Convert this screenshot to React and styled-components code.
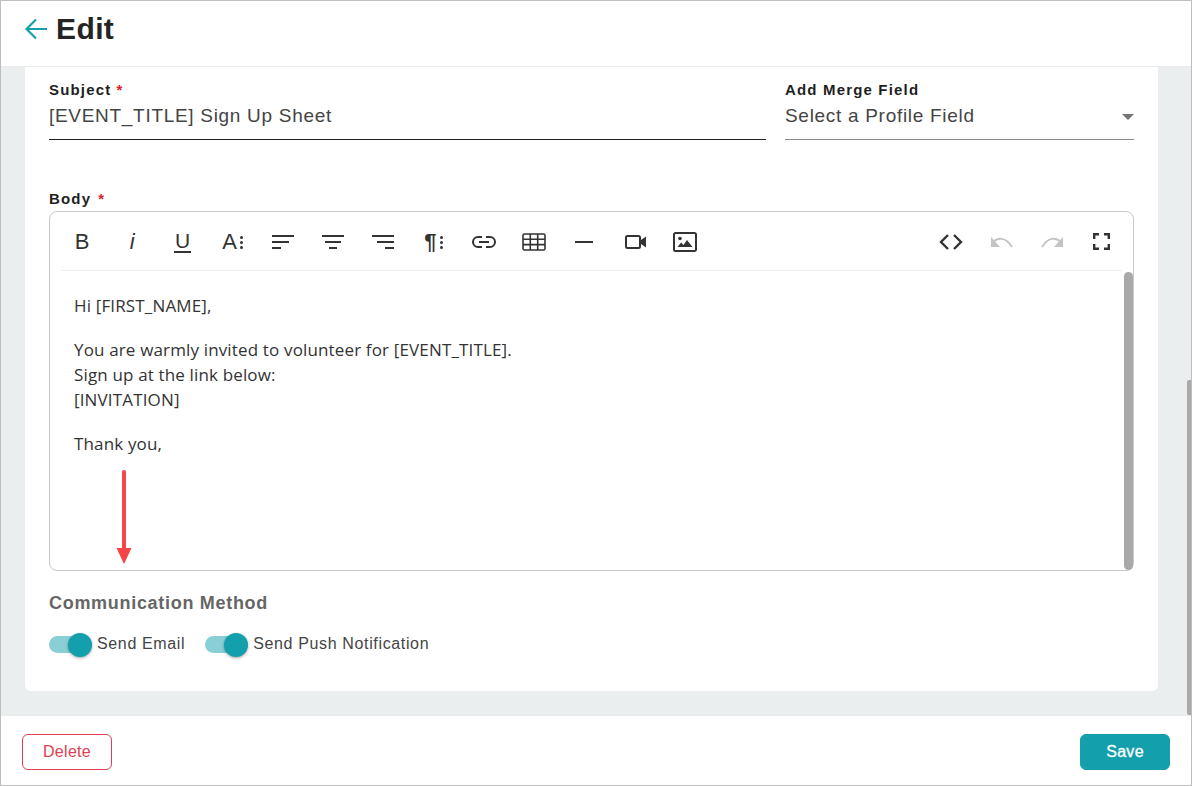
import styled, { createGlobalStyle } from "styled-components";

const GlobalStyle = createGlobalStyle`
  html, body {
    margin: 0;
    padding: 0;
    background: #fff;
  }
  * {
    box-sizing: border-box;
  }
  body {
    font-family: "Liberation Sans", Arial, sans-serif;
  }
`;

const Frame = styled.div`
  position: relative;
  display: flex;
  flex-direction: column;
  width: 1192px;
  height: 786px;
  border: 1px solid #bdbdbd;
  overflow: hidden;
`;

const Header = styled.header`
  display: flex;
  align-items: center;
  flex: none;
  height: 66px;
  padding: 0 0 9px 24px;
  background: #fff;
  border-bottom: 1px solid #e8eaeb;
`;

const BackArrow = styled.svg`
  width: 22px;
  height: 22px;
  margin-right: 9px;
  color: #149fac;
`;

const Title = styled.h1`
  margin: 0;
  font-size: 30px;
  font-weight: 700;
  line-height: 36px;
  letter-spacing: 0.4px;
  color: #242424;
`;

const Main = styled.main`
  flex: 1;
  min-height: 0;
  overflow: hidden;
  padding: 0 33px 0 24px;
  background: #ebeeef;
`;

const Card = styled.section`
  height: 624px;
  padding: 14px 24px 0;
  background: #fff;
  border-radius: 0 0 6px 6px;
`;

const FieldRow = styled.div`
  display: flex;
  gap: 19px;
`;

const Field = styled.div`
  flex: ${(p) => (p.$wide ? "none" : "1")};
  width: ${(p) => (p.$wide ? "717px" : "auto")};
`;

const Label = styled.label`
  display: block;
  font-size: 15px;
  font-weight: 700;
  line-height: 18px;
  letter-spacing: 1.17px;
  color: #1f1f1f;
`;

const Required = styled.span`
  margin-left: ${(p) => p.$gap || 5}px;
  color: #d9202f;
`;

const Value = styled.div`
  display: flex;
  align-items: center;
  justify-content: space-between;
  height: 41px;
  padding-bottom: 6px;
  font-size: 19px;
  font-weight: 400;
  letter-spacing: 0.7px;
  color: #444;
  border-bottom: 1px solid ${(p) => p.$line};
`;

const Caret = styled.span`
  width: 0;
  height: 0;
  margin-top: 2px;
  border-left: 6px solid transparent;
  border-right: 6px solid transparent;
  border-top: 6px solid #757575;
`;

const BodyLabel = styled(Label)`
  margin-top: 50px;
`;

const Editor = styled.div`
  position: relative;
  height: 360px;
  margin-top: 3px;
  border: 1px solid #c9c9c9;
  border-radius: 8px;
`;

const Toolbar = styled.div`
  display: flex;
  align-items: center;
  justify-content: space-between;
  height: 59px;
  margin: 0 11px;
  padding-top: 1px;
  border-bottom: 1px solid #eeeeee;
`;

const ToolGroup = styled.div`
  display: flex;
  margin: ${(p) => (p.$end ? "0 -5px 0 0" : "0 0 0 -4px")};
`;

const ToolButton = styled.span`
  display: flex;
  align-items: center;
  justify-content: center;
  width: 50.2px;
  height: 30px;
  color: ${(p) => (p.$disabled ? "#c4c4c4" : "#333")};
  font-size: 22px;
  line-height: 22px;
`;

const ToolItalic = styled.span`
  font-style: italic;
  font-size: 22px;
`;

const ToolUnderline = styled.span`
  display: block;
  width: 17px;
  height: 21px;
  margin-top: 2px;
  line-height: 18px;
  text-align: center;
  font-size: 21px;
  border-bottom: 2px solid #333;
`;

const MoreDots = styled.span`
  display: flex;
  flex-direction: column;
  gap: 2px;
  margin: 1px 0 0 3px;

  i {
    display: block;
    width: 3px;
    height: 3px;
    border-radius: 50%;
    background: #333;
  }
`;

const Content = styled.div`
  padding: 22px 24px 0;
  font-family: "Open Sans", "Noto Sans", sans-serif;
  font-size: 17px;
  line-height: 25px;
  letter-spacing: 0.15px;
  color: #333;

  p {
    margin: 0 0 19px;
  }
`;

const EditorScroll = styled.div`
  position: absolute;
  top: 60px;
  right: 0;
  width: 9px;
  height: 298px;
  border-radius: 5px;
  background: #a9a9a9;
`;

const RedArrow = styled.svg`
  position: absolute;
  left: 66px;
  top: 258px;
  width: 16px;
  height: 95px;
`;

const SectionTitle = styled.h2`
  margin: 21px 0 0;
  font-size: 18px;
  font-weight: 700;
  line-height: 22px;
  letter-spacing: 0.7px;
  color: #666;
`;

const SwitchRow = styled.div`
  display: flex;
  align-items: center;
  gap: 20px;
  margin-top: 21px;
`;

const SwitchItem = styled.span`
  display: flex;
  align-items: center;
  gap: 5px;
  font-size: 16px;
  letter-spacing: 0.64px;
  color: #444;
`;

const Track = styled.span`
  position: relative;
  display: block;
  width: 43px;
  height: 17px;
  border-radius: 9px;
  background: #8acfd5;
`;

const Thumb = styled.span`
  position: absolute;
  right: 0;
  top: -3px;
  width: 24px;
  height: 24px;
  border-radius: 50%;
  background: #149fac;
  box-shadow: 0 1px 3px rgba(0, 0, 0, 0.35);
`;

const Footer = styled.footer`
  display: flex;
  align-items: center;
  justify-content: space-between;
  flex: none;
  height: 70px;
  padding: 3px 21px 0 21px;
  background: #fff;
  border-top: 1px solid #e8eaeb;
`;

const Button = styled.button`
  width: 90px;
  height: 36px;
  padding: 0;
  font-family: inherit;
  font-size: 16px;
  letter-spacing: 0.3px;
  -webkit-text-stroke: ${(p) => (p.$primary ? "0.3px #fff" : "0")};
  color: ${(p) => (p.$primary ? "#fff" : "#e0404f")};
  background: ${(p) => (p.$primary ? "#149fac" : "#fff")};
  border: 1px solid ${(p) => (p.$primary ? "#149fac" : "#e0404f")};
  border-radius: 6px;
`;

const PageScroll = styled.div`
  position: absolute;
  right: 0;
  top: 379px;
  width: 4px;
  height: 335px;
  border-radius: 2px 0 0 2px;
  background: #a9a9a9;
`;

const Icon = ({ w = 24, h = 24, children }) => (
  <svg width={w} height={h} viewBox={`0 0 ${w} ${h}`} fill="none" stroke="currentColor" strokeWidth="2">
    {children}
  </svg>
);

function AlignIcon({ mid, low }) {
  return (
    <Icon w={24} h={16}>
      <path d="M1 2h22" />
      <path d={mid} />
      <path d={low} />
    </Icon>
  );
}

const tools = [
  "B",
  <ToolItalic key="i">i</ToolItalic>,
  <ToolUnderline key="u">U</ToolUnderline>,
  <>A<MoreDots><i /><i /><i /></MoreDots></>,
  <AlignIcon mid="M1 8h17" low="M1 14h9" />,
  <AlignIcon mid="M4 8h16" low="M8 14h8" />,
  <AlignIcon mid="M6 8h17" low="M14 14h9" />,
  <><b>¶</b><MoreDots><i /><i /><i /></MoreDots></>,
  <Icon w={26} h={14}>
    <path d="M11 2H7a5 5 0 0 0 0 10h4M15 2h4a5 5 0 0 1 0 10h-4M8 7h10" />
  </Icon>,
  <Icon w={24} h={18}>
    <path strokeWidth="1.6" d="M2.5 1h19a1.5 1.5 0 0 1 1.5 1.5v13a1.5 1.5 0 0 1-1.5 1.5h-19A1.5 1.5 0 0 1 1 15.5v-13A1.5 1.5 0 0 1 2.5 1zM1 6.3h22M1 11.6h22M8.3 1v16M15.7 1v16" />
  </Icon>,
  <Icon w={18} h={4}>
    <path d="M0 2h18" />
  </Icon>,
  <Icon w={26} h={14}>
    <path d="M6.5 1h11a1.5 1.5 0 0 1 1.5 1.5v9a1.5 1.5 0 0 1-1.5 1.5h-11A1.5 1.5 0 0 1 5 11.5v-9A1.5 1.5 0 0 1 6.5 1z" />
    <path fill="currentColor" stroke="none" d="M20 5l5-3.5v11L20 9z" />
  </Icon>,
  <Icon w={26} h={20}>
    <path d="M4.5 1h19A1.5 1.5 0 0 1 25 2.5v15a1.5 1.5 0 0 1-1.5 1.5h-19A1.5 1.5 0 0 1 3 17.5v-15A1.5 1.5 0 0 1 4.5 1z" />
    <circle cx="9" cy="6.5" r="1.8" fill="currentColor" stroke="none" />
    <path fill="currentColor" stroke="none" d="M6.5 15l3.6-4.5 2.4 2.6 3.5-5 5.5 6.9z" />
  </Icon>,
];

const endTools = [
  <Icon w={24} h={18}>
    <path strokeWidth="2.4" d="M9 2L2 9l7 7M15 2l7 7-7 7" />
  </Icon>,
  <Icon w={24} h={12}>
    <path strokeWidth="2" d="M3 6c5-5 13-5 19 5" />
    <path fill="currentColor" stroke="none" d="M1 1v10h9z" />
  </Icon>,
  <Icon w={24} h={12}>
    <path strokeWidth="2" d="M21 6C16 1 8 1 2 11" />
    <path fill="currentColor" stroke="none" d="M23 1v10h-9z" />
  </Icon>,
  <Icon w={17} h={17}>
    <path strokeWidth="2.4" d="M1.2 6V1.2H6M11 1.2h4.8V6M15.8 11v4.8H11M6 15.8H1.2V11" />
  </Icon>,
];

function Toggle({ label }) {
  return (
    <SwitchItem>
      <Track>
        <Thumb />
      </Track>
      {label}
    </SwitchItem>
  );
}

export default function App() {
  return (
    <>
      <GlobalStyle />
      <Frame>
        <Header>
          <BackArrow viewBox="0 0 22 22" fill="none" stroke="currentColor" strokeWidth="2.2">
            <path d="M22 11H2M11 1.5L1.5 11l9.5 9.5" />
          </BackArrow>
          <Title>Edit</Title>
        </Header>

        <Main>
          <Card>
            <FieldRow>
              <Field $wide>
                <Label>Subject<Required>*</Required></Label>
                <Value $line="#222">[EVENT_TITLE] Sign Up Sheet</Value>
              </Field>
              <Field>
                <Label>Add Merge Field</Label>
                <Value $line="#8a8a8a">
                  Select a Profile Field
                  <Caret />
                </Value>
              </Field>
            </FieldRow>

            <BodyLabel>Body<Required $gap={7}>*</Required></BodyLabel>
            <Editor>
              <Toolbar>
                <ToolGroup>
                  {tools.map((tool, i) => (
                    <ToolButton key={i}>{tool}</ToolButton>
                  ))}
                </ToolGroup>
                <ToolGroup $end>
                  {endTools.map((tool, i) => (
                    <ToolButton key={i} $disabled={i === 1 || i === 2}>{tool}</ToolButton>
                  ))}
                </ToolGroup>
              </Toolbar>
              <Content>
                <p>Hi [FIRST_NAME],</p>
                <p>
                  You are warmly invited to volunteer for [EVENT_TITLE].<br />
                  Sign up at the link below:<br />
                  [INVITATION]
                </p>
                <p>Thank you,</p>
              </Content>
              <EditorScroll />
              <RedArrow viewBox="0 0 16 95">
                <path d="M8 2v78" stroke="#f44648" strokeWidth="4" strokeLinecap="round" />
                <path d="M0.5 78h15L8 94z" fill="#f44648" />
              </RedArrow>
            </Editor>

            <SectionTitle>Communication Method</SectionTitle>
            <SwitchRow>
              <Toggle label="Send Email" />
              <Toggle label="Send Push Notification" />
            </SwitchRow>
          </Card>
        </Main>

        <Footer>
          <Button>Delete</Button>
          <Button $primary>Save</Button>
        </Footer>
        <PageScroll />
      </Frame>
    </>
  );
}
